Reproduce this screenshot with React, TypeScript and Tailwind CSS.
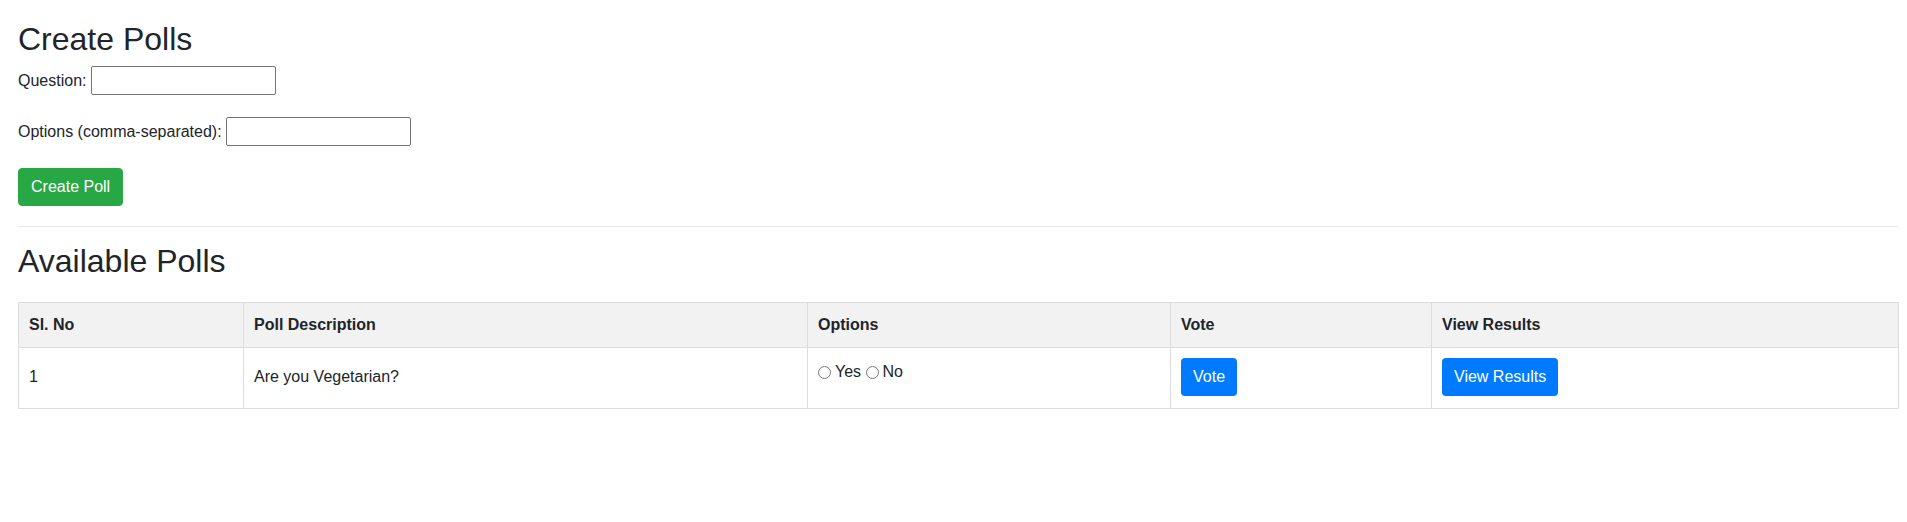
// Poll maker page: a small create form on top, the list of polls in a table below.

interface Poll {
  id: number
  question: string
  options: string[]
}

const POLLS: Poll[] = [{ id: 1, question: 'Are you Vegetarian?', options: ['Yes', 'No'] }]

const COLS = [
  { label: 'Sl. No', width: 'w-[225px]' },
  { label: 'Poll Description', width: 'w-[564px]' },
  { label: 'Options', width: 'w-[363px]' },
  { label: 'Vote', width: 'w-[261px]' },
  { label: 'View Results', width: 'w-[467px]' },
]

function Field({ label }: { label: string }) {
  return (
    <div className="flex h-[29px] items-center">
      <label className="whitespace-pre">{label} </label>
      <input
        type="text"
        className="h-[29px] w-[185px] rounded-[2px] border border-[#767676] bg-white px-[3px] outline-none"
      />
    </div>
  )
}

function BlueButton({ children }: { children: React.ReactNode }) {
  return (
    <button
      type="button"
      className="inline-block rounded-[4px] border-0 bg-[#007bff] px-[12px] py-[7px] align-baseline leading-6 text-white"
    >
      {children}
    </button>
  )
}

export default function App() {
  return (
    <div
      className="min-h-[522px] bg-white pl-[18px] pr-[9px] pt-[20px] text-[16px] leading-6 text-[#212529]"
      style={{ fontFamily: '"Liberation Sans", Arial, sans-serif' }}
    >
      <h2 className="mb-[8px] text-[32px] font-normal leading-[38px]">Create Polls</h2>

      <form className="flex flex-col gap-[22px]" onSubmit={e => e.preventDefault()}>
        <Field label="Question:" />
        <Field label="Options (comma-separated):" />
        <div>
          <button
            type="submit"
            className="h-[38px] rounded-[4px] border border-[#28a745] bg-[#28a745] px-[12px] leading-6 text-white"
          >
            Create Poll
          </button>
        </div>
      </form>

      <hr className="mt-[20px] border-t border-[#e6e6e6]" />

      <h2 className="mb-[22px] mt-[15px] text-[32px] font-normal leading-[38px]">Available Polls</h2>

      <table className="w-full table-fixed border-collapse border border-[#dddddd]">
        <colgroup>
          {COLS.map(c => (
            <col key={c.label} className={c.width} />
          ))}
        </colgroup>
        <thead>
          <tr className="bg-[#f2f2f2]">
            {COLS.map(c => (
              <th key={c.label} className="border border-[#dddddd] p-[10px] text-left align-middle font-bold">
                {c.label}
              </th>
            ))}
          </tr>
        </thead>
        <tbody>
          {POLLS.map(p => (
            <tr key={p.id}>
              <td className="border border-[#dddddd] px-[10px] pb-[12px] pt-[10px] align-baseline">{p.id}</td>
              <td className="border border-[#dddddd] px-[10px] pb-[12px] pt-[10px] align-baseline">{p.question}</td>
              <td className="border border-[#dddddd] px-[10px] pb-[10px] pt-[12px] align-top">
                {p.options.map((o, i) => (
                  <span key={o}>
                    {i > 0 && ' '}
                    <label>
                      <input
                        type="radio"
                        name={`poll-${p.id}`}
                        value={o}
                        className="m-0 mr-[4px] h-[13px] w-[13px] align-[-2px]"
                      />
                      {o}
                    </label>
                  </span>
                ))}
              </td>
              <td className="border border-[#dddddd] px-[10px] pb-[12px] pt-[10px] align-baseline">
                <BlueButton>Vote</BlueButton>
              </td>
              <td className="border border-[#dddddd] px-[10px] pb-[12px] pt-[10px] align-baseline">
                <BlueButton>View Results</BlueButton>
              </td>
            </tr>
          ))}
        </tbody>
      </table>
    </div>
  )
}
